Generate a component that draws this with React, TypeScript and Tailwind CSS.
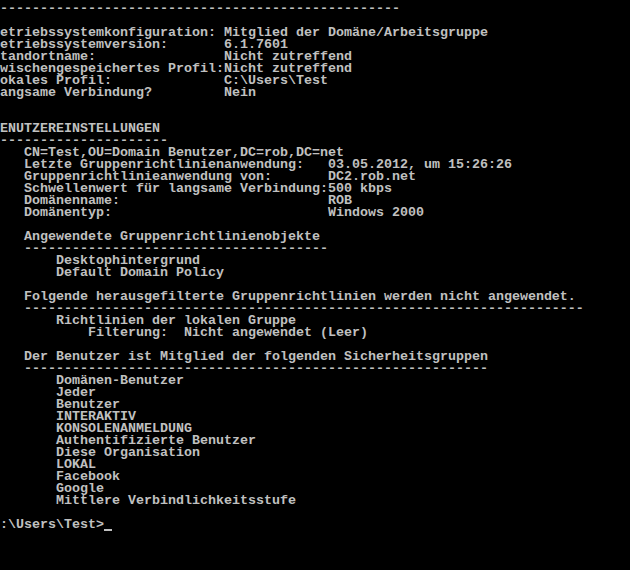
const COL_A = 28
const COL_B = 41

const kv = (label: string, value: string, col: number) => label.padEnd(col, " ") + value
const dashes = (indent: number, count: number) => " ".repeat(indent) + "-".repeat(count)

const groups = [
  "Domänen-Benutzer",
  "Jeder",
  "Benutzer",
  "INTERAKTIV",
  "KONSOLENANMELDUNG",
  "Authentifizierte Benutzer",
  "Diese Organisation",
  "LOKAL",
  "Facebook",
  "Google",
  "Mittlere Verbindlichkeitsstufe",
]

// console buffer, scrolled so the first row is half cut off
const lines: string[] = [
  "er  Daten zum Kontext vom  Domän im Protokollmodus",
  dashes(0, 50),
  "",
  kv("etriebssystemkonfiguration:", "Mitglied der Domäne/Arbeitsgruppe", COL_A),
  kv("etriebssystemversion:", "6.1.7601", COL_A),
  kv("tandortname:", "Nicht zutreffend", COL_A),
  kv("wischengespeichertes Profil:", "Nicht zutreffend", COL_A),
  kv("okales Profil:", "C:\\Users\\Test", COL_A),
  kv("angsame Verbindung?", "Nein", COL_A),
  "",
  "",
  "ENUTZEREINSTELLUNGEN",
  dashes(0, 21),
  "   CN=Test,OU=Domain Benutzer,DC=rob,DC=net",
  kv("   Letzte Gruppenrichtlinienanwendung:", "03.05.2012, um 15:26:26", COL_B),
  kv("   Gruppenrichtlinieanwendung von:", "DC2.rob.net", COL_B),
  kv("   Schwellenwert für langsame Verbindung:", "500 kbps", COL_B),
  kv("   Domänenname:", "ROB", COL_B),
  kv("   Domänentyp:", "Windows 2000", COL_B),
  "",
  "   Angewendete Gruppenrichtlinienobjekte",
  dashes(3, 38),
  "       Desktophintergrund",
  "       Default Domain Policy",
  "",
  "   Folgende herausgefilterte Gruppenrichtlinien werden nicht angewendet.",
  dashes(3, 70),
  "       Richtlinien der lokalen Gruppe",
  "           Filterung:  Nicht angewendet (Leer)",
  "",
  "   Der Benutzer ist Mitglied der folgenden Sicherheitsgruppen",
  dashes(3, 58),
  ...groups.map((g) => "       " + g),
  "",
]

export default function App() {
  return (
    <div className="h-[570px] w-[630px] overflow-hidden bg-black">
      <div
        className="-mt-[9px] whitespace-pre text-[13.33px] leading-[12px] font-bold text-[#c0c0c0]"
        style={{ fontFamily: '"Liberation Mono", "DejaVu Sans Mono", monospace' }}
      >
        {lines.map((line, i) => (
          <div key={i} className="h-[12px]">
            {line}
          </div>
        ))}
        <div className="h-[12px]">
          {":\\Users\\Test>"}
          <span className="inline-block h-[12px] w-[8px] align-top border-b-2 border-[#c0c0c0]" />
        </div>
      </div>
    </div>
  )
}
